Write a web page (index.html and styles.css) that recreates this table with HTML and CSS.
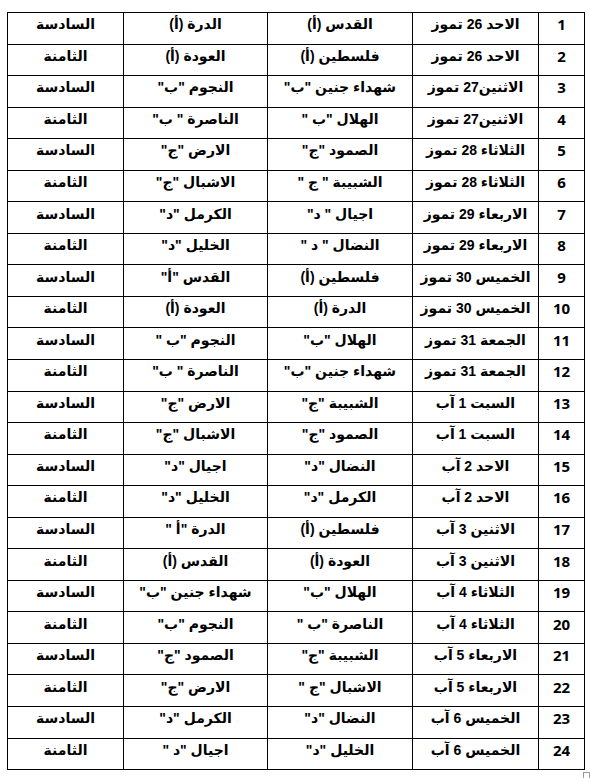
FILE: index.html
```html
<!DOCTYPE html>
<html lang="ar">
<head>
<meta charset="utf-8">
<title>جدول المباريات</title>
<link rel="stylesheet" href="styles.css">
</head>
<body>
<table class="schedule" dir="rtl">
<colgroup>
<col class="c-num"><col class="c-date"><col class="c-a"><col class="c-b"><col class="c-cat">
</colgroup>
<tbody>
<tr><td class="num">1</td><td>الاحد 26 تموز</td><td>القدس (أ)</td><td>الدرة (أ)</td><td>السادسة</td></tr>
<tr><td class="num">2</td><td>الاحد 26 تموز</td><td>فلسطين (أ)</td><td>العودة (أ)</td><td>الثامنة</td></tr>
<tr><td class="num">3</td><td>الاثنين27 تموز</td><td>شهداء جنين "ب"</td><td>النجوم "ب"</td><td>السادسة</td></tr>
<tr><td class="num">4</td><td>الاثنين27 تموز</td><td>الهلال "ب "</td><td>الناصرة " ب"</td><td>الثامنة</td></tr>
<tr><td class="num">5</td><td>الثلاثاء 28 تموز</td><td>الصمود "ج"</td><td>الارض "ج"</td><td>السادسة</td></tr>
<tr><td class="num">6</td><td>الثلاثاء 28 تموز</td><td>الشبيبة " ج "</td><td>الاشبال "ج"</td><td>الثامنة</td></tr>
<tr><td class="num">7</td><td>الاربعاء 29 تموز</td><td>اجيال " د"</td><td>الكرمل "د"</td><td>السادسة</td></tr>
<tr><td class="num">8</td><td>الاربعاء 29 تموز</td><td>النضال " د "</td><td>الخليل "د"</td><td>الثامنة</td></tr>
<tr><td class="num">9</td><td>الخميس 30 تموز</td><td>فلسطين (أ)</td><td>القدس "أ"</td><td>السادسة</td></tr>
<tr><td class="num">10</td><td>الخميس 30 تموز</td><td>الدرة (أ)</td><td>العودة (أ)</td><td>الثامنة</td></tr>
<tr><td class="num">11</td><td>الجمعة 31 تموز</td><td>الهلال "ب"</td><td>النجوم "ب "</td><td>السادسة</td></tr>
<tr><td class="num">12</td><td>الجمعة 31 تموز</td><td>شهداء جنين "ب"</td><td>الناصرة " ب"</td><td>الثامنة</td></tr>
<tr><td class="num">13</td><td>السبت 1 آب</td><td>الشبيبة "ج"</td><td>الارض "ج"</td><td>السادسة</td></tr>
<tr><td class="num">14</td><td>السبت 1 آب</td><td>الصمود "ج"</td><td>الاشبال "ج"</td><td>الثامنة</td></tr>
<tr><td class="num">15</td><td>الاحد 2 آب</td><td>النضال "د"</td><td>اجيال "د"</td><td>السادسة</td></tr>
<tr><td class="num">16</td><td>الاحد 2 آب</td><td>الكرمل "د"</td><td>الخليل "د"</td><td>الثامنة</td></tr>
<tr><td class="num">17</td><td>الاثنين 3 آب</td><td>فلسطين (أ)</td><td>الدرة "أ "</td><td>السادسة</td></tr>
<tr><td class="num">18</td><td>الاثنين 3 آب</td><td>العودة (أ)</td><td>القدس (أ)</td><td>الثامنة</td></tr>
<tr><td class="num">19</td><td>الثلاثاء 4 آب</td><td>الهلال "ب"</td><td>شهداء جنين "ب"</td><td>السادسة</td></tr>
<tr><td class="num">20</td><td>الثلاثاء 4 آب</td><td>الناصرة "ب "</td><td>النجوم "ب"</td><td>الثامنة</td></tr>
<tr><td class="num">21</td><td>الاربعاء 5 آب</td><td>الشبيبة "ج"</td><td>الصمود "ج"</td><td>السادسة</td></tr>
<tr><td class="num">22</td><td>الاربعاء 5 آب</td><td>الاشبال "ج "</td><td>الارض "ج"</td><td>الثامنة</td></tr>
<tr><td class="num">23</td><td>الخميس 6 آب</td><td>النضال "د"</td><td>الكرمل "د"</td><td>السادسة</td></tr>
<tr><td class="num">24</td><td>الخميس 6 آب</td><td>الخليل "د"</td><td>اجيال "د "</td><td>الثامنة</td></tr>
</tbody>
</table>
<div class="corner-mark"></div>
</body>
</html>
```
FILE: styles.css
```css
html, body {
  margin: 0;
  padding: 0;
  background: #ffffff;
}
body {
  padding: 12px 0 0 7px;
  font-family: "Liberation Sans", "DejaVu Sans", sans-serif;
  color: #000000;
  position: relative;
  height: 778px;
  box-sizing: border-box;
  overflow: hidden;
}
.schedule {
  border-collapse: collapse;
  table-layout: fixed;
  width: 577px;
}
.c-num { width: 46px; }
.c-date { width: 126px; }
.c-a { width: 145px; }
.c-b { width: 144px; }
.c-cat { width: 116px; }
.schedule tr {
  height: 31.55px;
}
.schedule td {
  border: 1px solid #000000;
  padding: 0 2px 8px;
  line-height: 18px;
  text-align: center;
  vertical-align: middle;
  font-weight: bold;
  font-size: 14px;
  white-space: nowrap;
  overflow: hidden;
}
.schedule td.num {
  font-family: "Open Sans", "Liberation Sans", sans-serif;
  font-size: 15px;
}
.corner-mark {
  position: absolute;
  left: 583px;
  top: 772px;
  width: 5px;
  height: 5px;
  border: 1px solid #9a9a9a;
}
```
